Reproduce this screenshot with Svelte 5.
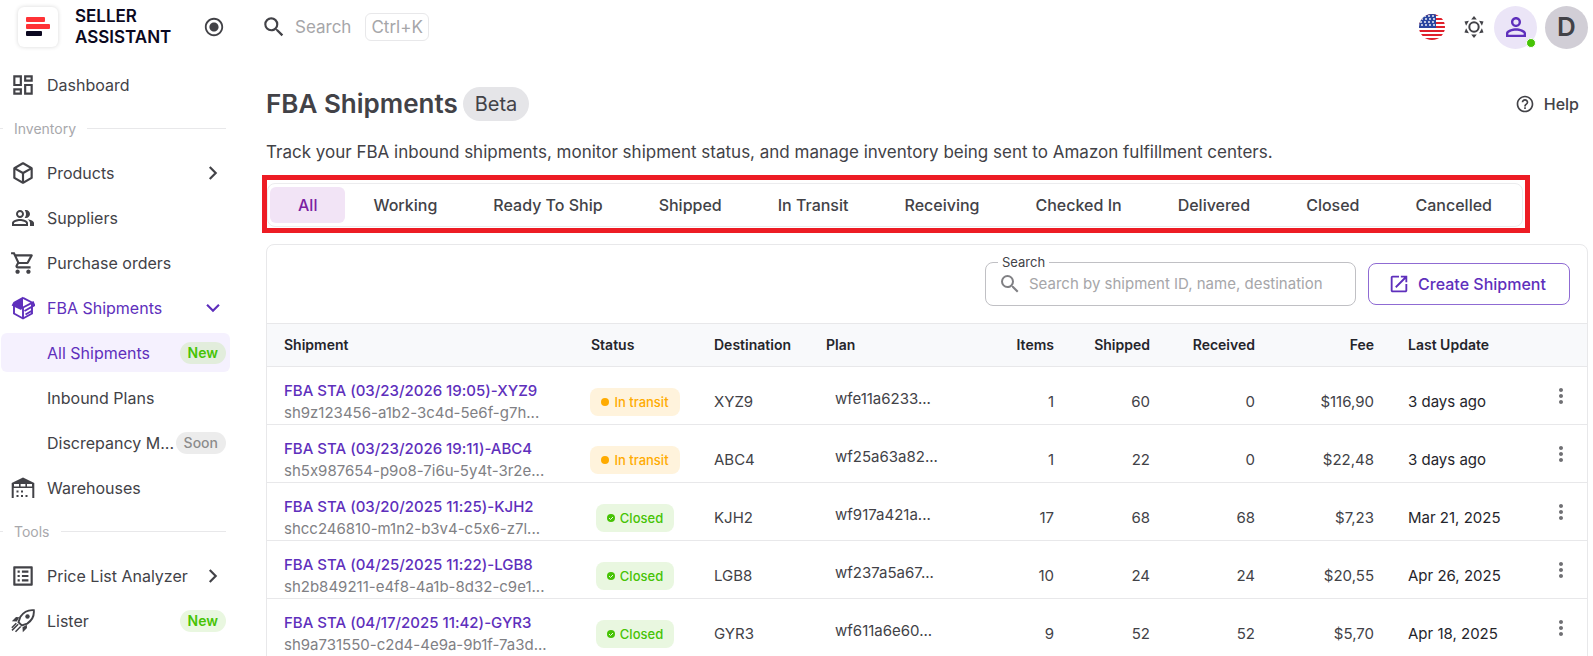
<script lang="ts">
	type NavItem = {
		label: string;
		icon?: string;
		size?: number;
		badge?: string;
		arrow?: 'right' | 'down';
		active?: boolean;
		current?: boolean;
		divider?: boolean;
	};

	const icons: Record<string, string> = {
		search:
			'M15.5 14h-.79l-.28-.27A6.47 6.47 0 0 0 16 9.5 6.5 6.5 0 1 0 9.5 16c1.61 0 3.09-.59 4.23-1.57l.27.28v.79l5 4.99L20.49 19zm-6 0C7.01 14 5 11.99 5 9.5S7.01 5 9.5 5 14 7.01 14 9.5 11.99 14 9.5 14',
		dashboard:
			'M19 5v2h-4V5h4M9 5v6H5V5h4m10 8v6h-4v-6h4M9 17v2H5v-2h4M21 3h-8v6h8V3zM11 3H3v10h8V3zm10 8h-8v10h8V11zm-10 4H3v6h8v-6z',
		cube: 'M21 16.5c0 .38-.21.71-.53.88l-7.9 4.44c-.16.12-.36.18-.57.18s-.41-.06-.57-.18l-7.9-4.44A.99.99 0 0 1 3 16.5v-9c0-.38.21-.71.53-.88l7.9-4.44c.16-.12.36-.18.57-.18s.41.06.57.18l7.9 4.44c.32.17.53.5.53.88v9zM12 4.15L6.04 7.5 12 10.85l5.96-3.35L12 4.15zM5 15.91l6 3.38v-6.71L5 9.21v6.7zm14 0v-6.7l-6 3.37v6.71l6-3.38z',
		people:
			'M16.67 13.13C18.04 14.06 19 15.32 19 17v3h4v-3c0-2.18-3.57-3.47-6.33-3.87zM15 12c2.21 0 4-1.79 4-4s-1.79-4-4-4c-.47 0-.91.1-1.33.24C14.5 5.27 15 6.58 15 8s-.5 2.73-1.33 3.76c.42.14.86.24 1.33.24zM9 12c2.21 0 4-1.79 4-4s-1.79-4-4-4-4 1.79-4 4 1.79 4 4 4zm0-6c1.1 0 2 .9 2 2s-.9 2-2 2-2-.9-2-2 .9-2 2-2zm0 7c-2.67 0-8 1.34-8 4v3h16v-3c0-2.66-5.33-4-8-4zm6 5H3v-.99C3.2 16.29 6.3 15 9 15s5.8 1.29 6 2v1z',
		cart: 'M15.55 13c.75 0 1.41-.41 1.75-1.03l3.58-6.49A.996.996 0 0 0 20.01 4H5.21l-.94-2H1v2h2l3.6 7.59-1.35 2.44C4.52 15.37 5.48 17 7 17h12v-2H7l1.1-2h7.45zM6.16 6h12.15l-2.76 5H8.53L6.16 6zM7 18c-1.1 0-1.99.9-1.99 2S5.9 22 7 22s2-.9 2-2-.9-2-2-2zm10 0c-1.1 0-1.99.9-1.99 2s.89 2 1.99 2 2-.9 2-2-.9-2-2-2z',
		list: 'M19 5v14H5V5h14m1.1-2H3.9c-.5 0-.9.4-.9.9v16.2c0 .4.4.9.9.9h16.2c.4 0 .9-.5.9-.9V3.9c0-.5-.5-.9-.9-.9zM11 7h6v2h-6V7zm0 4h6v2h-6v-2zm0 4h6v2h-6zM7 7h2v2H7zm0 4h2v2H7zm0 4h2v2H7z',
		warehouse:
			'M12 1.5 L23.3 7 V22 H21.3 V12 H2.7 V22 H.7 V7 z M3 8V10.500h5V8zM9.6 8V10.500h4.8V8zM16 8V10.500h5V8zM5.500 14.500h2v2h-2zM10 14.500h2v2h-2zM5.500 19h2v2h-2zM10 19h2v2h-2zM14.500 19h2v2h-2z',
		person:
			'M12 5.9a2.1 2.1 0 1 1 0 4.2 2.1 2.1 0 0 1 0-4.2m0 9c2.97 0 6.1 1.46 6.1 2.1v1.1H5.9V17c0-.64 3.13-2.1 6.1-2.1M12 4C9.79 4 8 5.79 8 8s1.79 4 4 4 4-1.79 4-4-1.79-4-4-4zm0 9c-2.67 0-8 1.34-8 4v3h16v-3c0-2.66-5.33-4-8-4z',
		help: 'M11 18h2v-2h-2v2zm1-16C6.48 2 2 6.48 2 12s4.48 10 10 10 10-4.48 10-10S17.52 2 12 2zm0 18c-4.41 0-8-3.59-8-8s3.59-8 8-8 8 3.59 8 8-3.59 8-8 8zm0-14c-2.21 0-4 1.79-4 4h2c0-1.1.9-2 2-2s2 .9 2 2c0 2-3 1.75-3 5h2c0-2.25 3-2.5 3-5 0-2.21-1.79-4-4-4z',
		radio:
			'M12 7c-2.76 0-5 2.24-5 5s2.24 5 5 5 5-2.24 5-5-2.24-5-5-5zm0-5C6.48 2 2 6.48 2 12s4.48 10 10 10 10-4.48 10-10S17.52 2 12 2zm0 18c-4.42 0-8-3.58-8-8s3.58-8 8-8 8 3.58 8 8-3.58 8-8 8z',
		open: 'M19 19H5V5h7V3H5c-1.11 0-2 .9-2 2v14c0 1.1.89 2 2 2h14c1.1 0 2-.9 2-2v-7h-2v7zM14 3v2h3.59l-9.83 9.83 1.41 1.41L19 6.41V10h2V3h-7z',
		more: 'M12 8c1.1 0 2-.9 2-2s-.9-2-2-2-2 .9-2 2 .9 2 2 2m0 2c-1.1 0-2 .9-2 2s.9 2 2 2 2-.9 2-2-.9-2-2-2m0 6c-1.1 0-2 .9-2 2s.9 2 2 2 2-.9 2-2-.9-2-2-2',
	};

	const nav: NavItem[] = [
		{ label: 'Dashboard', icon: 'dashboard' },
		{ label: 'Inventory', divider: true },
		{ label: 'Products', icon: 'cube' , arrow: 'right' },
		{ label: 'Suppliers', icon: 'people', size: 24 },
		{ label: 'Purchase orders', icon: 'cart' },
		{ label: 'FBA Shipments', icon: 'box', size: 24, arrow: 'down', active: true },
		{ label: 'All Shipments', badge: 'New', active: true, current: true },
		{ label: 'Inbound Plans' },
		{ label: 'Discrepancy M...', badge: 'Soon' },
		{ label: 'Warehouses', icon: 'warehouse', size: 24 },
		{ label: 'Tools', divider: true },
		{ label: 'Price List Analyzer', icon: 'list', arrow: 'right' },
		{ label: 'Lister', icon: 'rocket', size: 24, badge: 'New' },
	];

	const tabs = [
		'All',
		'Working',
		'Ready To Ship',
		'Shipped',
		'In Transit',
		'Receiving',
		'Checked In',
		'Delivered',
		'Closed',
		'Cancelled',
	];
	let selectedTab = $state('All');

	const shipments = [
		{ name: 'FBA STA (03/23/2026 19:05)-XYZ9', id: 'sh9z123456-a1b2-3c4d-5e6f-g7h...', status: 'In transit', dest: 'XYZ9', plan: 'wfe11a6233...', items: 1, shipped: 60, received: 0, fee: '$116,90', updated: '3 days ago' },
		{ name: 'FBA STA (03/23/2026 19:11)-ABC4', id: 'sh5x987654-p9o8-7i6u-5y4t-3r2e...', status: 'In transit', dest: 'ABC4', plan: 'wf25a63a82...', items: 1, shipped: 22, received: 0, fee: '$22,48', updated: '3 days ago' },
		{ name: 'FBA STA (03/20/2025 11:25)-KJH2', id: 'shcc246810-m1n2-b3v4-c5x6-z7l...', status: 'Closed', dest: 'KJH2', plan: 'wf917a421a...', items: 17, shipped: 68, received: 68, fee: '$7,23', updated: 'Mar 21, 2025' },
		{ name: 'FBA STA (04/25/2025 11:22)-LGB8', id: 'sh2b849211-e4f8-4a1b-8d32-c9e1...', status: 'Closed', dest: 'LGB8', plan: 'wf237a5a67...', items: 10, shipped: 24, received: 24, fee: '$20,55', updated: 'Apr 26, 2025' },
		{ name: 'FBA STA (04/17/2025 11:42)-GYR3', id: 'sh9a731550-c2d4-4e9a-9b1f-7a3d...', status: 'Closed', dest: 'GYR3', plan: 'wf611a6e60...', items: 9, shipped: 52, received: 52, fee: '$5,70', updated: 'Apr 18, 2025' },
	];
</script>

{#snippet icon(name: string, size = 24)}
	<svg width={size} height={size} viewBox="0 0 24 24" fill="currentColor" fill-rule="evenodd" aria-hidden="true">
		{#if name === 'box'}
			<path d="M12 .8 2.500 6 .6 9.500l2 1 7.400 3.500 2-2.500z" />
			<path
				d="M12 1.800 21 6.500V17.500L12 22.500 3 17.500V9M12 11.500V22.500M12 11.500 22 6.300 23.300 9.200 13.500 15M14.500 18.500 20.500 15"
				fill="none"
				stroke="currentColor"
				stroke-width="1.900"
			/>
		{:else if name === 'rocket'}
			<path
				d="M22.800 1.200c-6-.6-10.300 2-13.400 6.600L7.500 13.200l3.300 3.300 5.400-1.900c4.600-3.100 7.200-7.400 6.600-13.400z"
				fill="none"
				stroke="currentColor"
				stroke-width="1.900"
			/>
			<circle cx="16.500" cy="7.500" r="2.200" />
			<path d="M8.300 8.200 5 8 .8 12.200l5 .3zM15.800 15.700l.2 3.300-4.200 4.200-.3-5z" />
			<path d="M7.200 15.200 1 21.400M5.300 14.300.8 18.800M9.700 17.500 4.500 22.800" fill="none" stroke="currentColor" stroke-width="1.500" />
		{:else}
			<path d={icons[name]} />
		{/if}
	</svg>
{/snippet}

<div class="app">
	<aside class="sidebar">
		<div class="brand">
			<span class="logo">
				<svg width="24" height="20" viewBox="0 0 24 20" aria-hidden="true">
					<rect width="19" height="5" rx="1" fill="#ff3236" />
					<rect y="7" width="24" height="5" rx="1" fill="#ff3236" />
					<rect y="14" width="16" height="5" rx="1" fill="#0b0820" />
				</svg>
			</span>
			<span class="brand-name">SELLER<br />ASSISTANT</span>
			<button class="icon-btn pin" aria-label="Collapse menu">{@render icon('radio', 22)}</button>
		</div>

		<nav>
			{#each nav as item}
				{#if item.divider}
					<div class="divider"><span>{item.label}</span></div>
				{:else}
					<a href="#top" class="nav-item" class:active={item.active} class:current={item.current}>
						<span class="nav-icon">
							{#if item.icon}{@render icon(item.icon, item.size ?? 26)}{/if}
						</span>
						<span class="nav-label">{item.label}</span>
						{#if item.badge}
							<span class="badge" class:soon={item.badge === 'Soon'}>{item.badge}</span>
						{/if}
						{#if item.arrow}
							<svg class="arrow" class:down={item.arrow === 'down'} width="26" height="26" viewBox="0 0 24 24" aria-hidden="true">
								<path d="M9 6.500l5.500 5.500L9 17.500" fill="none" stroke="currentColor" stroke-width="2" />
							</svg>
						{/if}
					</a>
				{/if}
			{/each}
		</nav>
	</aside>

	<div class="content">
		<header class="topbar">
			<button class="global-search">
				{@render icon('search', 26)}
				<span>Search</span>
				<kbd>Ctrl+K</kbd>
			</button>
			<div class="tools">
				<button class="icon-btn" aria-label="Language">
					<svg width="26" height="26" viewBox="0 0 26 26" aria-hidden="true">
						<clipPath id="flag"><circle cx="13" cy="13" r="13" /></clipPath>
						<g clip-path="url(#flag)">
							<rect width="26" height="26" fill="#fff" />
							{#each [0, 4, 8, 12, 16, 20, 24] as y}
								<rect {y} width="26" height="2" fill="#e0202c" />
							{/each}
							<rect width="17" height="14" fill="#2a46a0" />
							{#each [2, 5, 8, 11] as y, row}
								{#each [2, 6, 10, 14] as x}
									<circle cx={x + (row % 2)} cy={y} r="0.9" fill="#fff" />
								{/each}
							{/each}
						</g>
					</svg>
				</button>
				<button class="icon-btn" aria-label="Theme">
					<svg width="22" height="24" viewBox="0 0 22 24" aria-hidden="true">
						<circle cx="11" cy="12" r="4.700" fill="none" stroke="currentColor" stroke-width="2" />
						{#each [0, 60, 120, 180, 240, 300] as angle}
							<path d="M11 1l2.800 3.500h-5.600z" fill="currentColor" transform="rotate({angle} 11 12)" />
						{/each}
					</svg>
				</button>
				<button class="avatar account" aria-label="Account">
					{@render icon('person', 30)}
					<span class="online"></span>
				</button>
				<button class="avatar initial">D</button>
			</div>
		</header>

		<main>
			<div class="title-row">
				<h1>FBA Shipments</h1>
				<span class="beta">Beta</span>
				<a class="help" href="#help">{@render icon('help', 20)}Help</a>
			</div>
			<p class="intro">
				Track your FBA inbound shipments, monitor shipment status, and manage inventory being sent to Amazon fulfillment
				centers.
			</p>

			<div class="highlight">
				<div class="tabs" role="tablist">
					{#each tabs as tab}
						<button
							role="tab"
							class:selected={selectedTab === tab}
							aria-selected={selectedTab === tab}
							onclick={() => (selectedTab = tab)}>{tab}</button
						>
					{/each}
				</div>
			</div>

			<section class="card">
				<div class="toolbar">
					<div class="field">
						<label for="shipment-search">Search</label>
						{@render icon('search')}
						<input id="shipment-search" type="text" placeholder="Search by shipment ID, name, destination" />
					</div>
					<button class="create">{@render icon('open', 22)}Create Shipment</button>
				</div>

				<table>
					<colgroup>
						<col />
						<col class="w-status" />
						<col class="w-dest" />
						<col class="w-plan" />
						<col class="w-items" />
						<col class="w-shipped" />
						<col class="w-received" />
						<col class="w-fee" />
						<col class="w-updated" />
						<col class="w-actions" />
					</colgroup>
					<thead>
						<tr>
							<th>Shipment</th>
							<th>Status</th>
							<th>Destination</th>
							<th>Plan</th>
							<th class="num">Items</th>
							<th class="num">Shipped</th>
							<th class="num">Received</th>
							<th class="num">Fee</th>
							<th>Last Update</th>
							<th></th>
						</tr>
					</thead>
					<tbody>
						{#each shipments as s}
							<tr>
								<td class="shipment">
									<a href="#shipment">{s.name}</a>
									<span>{s.id}</span>
								</td>
								<td class="status">
									<span class="chip-box">
										<span class="chip" class:closed={s.status === 'Closed'}>
											<svg width="8" height="8" viewBox="0 0 8 8" aria-hidden="true">
												<circle cx="4" cy="4" r="4" fill="currentColor" />
												{#if s.status === 'Closed'}
													<path d="M2 4l1.500 1.500L6 3" fill="none" stroke="#e9f7e0" />
												{/if}
											</svg>
											{s.status}
										</span>
									</span>
								</td>
								<td>{s.dest}</td>
								<td class="plan">{s.plan}</td>
								<td class="num">{s.items}</td>
								<td class="num">{s.shipped}</td>
								<td class="num">{s.received}</td>
								<td class="num">{s.fee}</td>
								<td class="updated">{s.updated}</td>
								<td class="actions">
									<button class="icon-btn" aria-label="Shipment actions">{@render icon('more')}</button>
								</td>
							</tr>
						{/each}
					</tbody>
				</table>
			</section>
		</main>
	</div>
</div>

<style>
	:global(body) {
		background: #fff;
	}

	.app {
		--purple: #5e2fbc;
		--ink: #424247;
		--line: #e8e8ea;
		display: flex;
		height: 100vh;
		overflow: hidden;
		font-family: Inter, 'Liberation Sans', sans-serif;
		font-size: 16px;
		font-variant-ligatures: no-contextual;
		line-height: 22px;
		color: var(--ink);
	}

	button,
	input {
		font: inherit;
		color: inherit;
	}

	button {
		border: 0;
		padding: 0;
		background: none;
		cursor: pointer;
	}

	a {
		color: inherit;
		text-decoration: none;
	}

	svg {
		display: block;
		flex: none;
	}

	.icon-btn {
		display: flex;
	}

	/* Sidebar */
	.sidebar {
		flex: none;
		width: 232px;
	}

	.brand {
		display: flex;
		align-items: center;
		height: 54px;
		padding: 0 7px 0 18px;
		margin-bottom: 11px;
	}

	.logo {
		display: grid;
		place-items: center;
		width: 40px;
		height: 40px;
		border-radius: 6px;
		box-shadow: 0 0 4px rgba(0, 0, 0, 0.16);
	}

	.brand-name {
		margin-left: 17px;
		font-size: 17px;
		font-weight: 600;
		line-height: 21px;
		color: #0b0820;
	}

	.pin {
		margin-left: auto;
	}

	nav {
		display: flex;
		flex-direction: column;
		gap: 6px;
	}

	.nav-item {
		display: flex;
		align-items: center;
		height: 39px;
		margin: 0 2px 0 1px;
		padding: 0 4px 0 9px;
		border-radius: 6px;
	}

	.nav-item.active {
		color: var(--purple);
	}

	.nav-item.current {
		background: #f5f1fe;
	}

	.nav-icon {
		display: flex;
		justify-content: center;
		flex: none;
		width: 26px;
		margin-right: 11px;
	}

	.nav-label {
		flex: 1;
		white-space: nowrap;
	}

	.arrow.down {
		transform: rotate(90deg);
	}

	.badge {
		padding: 0 8px;
		border-radius: 11px;
		background: #e9f7e0;
		font-size: 14px;
		font-weight: 600;
		color: #46c305;
	}

	.current .badge {
		background: #e2eddc;
	}

	.badge.soon {
		background: #ececec;
		font-weight: 500;
		color: #8c8c8c;
	}

	.divider {
		display: flex;
		align-items: center;
		gap: 11px;
		height: 37px;
		padding-right: 6px;
		font-size: 14px;
		color: #a8a8ac;
	}

	.divider::before,
	.divider::after {
		content: '';
		width: 3px;
		height: 1px;
		background: var(--line);
	}

	.divider::after {
		flex: 1;
	}

	/* Top bar */
	.content {
		flex: 1;
		min-width: 0;
		overflow-y: auto;
		scrollbar-width: none;
		padding: 0 5px 0 34px;
	}

	.topbar {
		display: flex;
		align-items: center;
		justify-content: space-between;
		height: 54px;
	}

	.global-search {
		display: flex;
		align-items: center;
		margin-left: -5px;
		font-size: 17px;
	}

	.global-search span {
		margin: 0 14px 0 8px;
		color: #a6a6a9;
	}

	kbd {
		padding: 2px 5px;
		border: 1px solid var(--line);
		border-radius: 6px;
		font: inherit;
		color: #a6a6a9;
	}

	.tools {
		display: flex;
		align-items: center;
	}

	.tools .icon-btn {
		margin-right: 18px;
	}

	.tools .icon-btn + .icon-btn {
		margin-right: 9px;
	}

	.avatar {
		display: grid;
		place-items: center;
		position: relative;
		width: 43px;
		height: 43px;
		border-radius: 50%;
	}

	.account {
		margin-right: 8px;
		background: #ebe5f7;
		color: var(--purple);
	}

	.initial {
		background: #d1ced6;
		font-size: 26px;
		font-weight: 600;
	}

	.online {
		position: absolute;
		right: 1px;
		bottom: 1px;
		width: 8px;
		height: 8px;
		border: 1px solid #fff;
		border-radius: 50%;
		background: #46c305;
	}

	/* Page heading */
	.title-row {
		display: flex;
		align-items: center;
		margin-top: 33px;
		height: 34px;
	}

	h1 {
		margin: 0;
		font-size: 26px;
		font-weight: 600;
		line-height: 34px;
	}

	.beta {
		margin-left: 5px;
		padding: 0 12px;
		border-radius: 17px;
		background: #e5e5e8;
		font-size: 20px;
		line-height: 34px;
	}

	.help {
		display: flex;
		align-items: center;
		gap: 9px;
		margin: 0 9px 0 auto;
		font-weight: 500;
	}

	.intro {
		margin: 20px 0 12px;
		font-size: 17px;
	}

	/* Status tabs */
	.highlight {
		margin: 0 58px 0 -4px;
		padding: 3px 2px 1px 0;
		border: 5px solid #ed1c24;
	}

	.tabs {
		display: flex;
		padding: 3px 2px;
		border: 1px solid #ececee;
		border-radius: 8px;
	}

	.tabs button {
		flex: 1 1 auto;
		height: 36px;
		border-radius: 6px;
		font-weight: 500;
		white-space: nowrap;
	}

	.tabs button.selected {
		background: #f2e4f6;
		color: #7b1fa2;
	}

	/* Table card */
	.card {
		margin-top: 11px;
		border: 1px solid var(--line);
		border-radius: 8px 8px 0 0;
	}

	.toolbar {
		display: flex;
		justify-content: flex-end;
		align-items: center;
		gap: 12px;
		padding: 17px;
	}

	.field {
		display: flex;
		align-items: center;
		gap: 7px;
		position: relative;
		width: 371px;
		height: 44px;
		padding: 0 12px;
		border: 1px solid #c0c0c4;
		border-radius: 8px;
		box-sizing: border-box;
		color: #808084;
	}

	.field label {
		position: absolute;
		top: -9px;
		left: 12px;
		padding: 0 4px;
		background: #fff;
		font-size: 13px;
		line-height: 16px;
		color: var(--ink);
	}

	.field input {
		flex: 1;
		min-width: 0;
		padding: 0;
		border: 0;
		outline: 0;
		background: none;
		font-size: 15px;
		color: var(--ink);
	}

	.field input::placeholder {
		color: #a6a6a9;
		opacity: 1;
	}

	.create {
		display: flex;
		align-items: center;
		justify-content: center;
		gap: 8px;
		width: 202px;
		height: 42px;
		padding-right: 4px;
		border: 1px solid #8f6bd3;
		border-radius: 8px;
		font-weight: 500;
		color: var(--purple);
	}

	table {
		width: 100%;
		border-collapse: separate;
		border-spacing: 0;
		table-layout: fixed;
		font-size: 15px;
	}

	.w-status {
		width: 123px;
	}
	.w-dest {
		width: 112px;
	}
	.w-plan {
		width: 165px;
	}
	.w-items {
		width: 97px;
	}
	.w-shipped {
		width: 96px;
	}
	.w-received {
		width: 105px;
	}
	.w-fee {
		width: 119px;
	}
	.w-updated {
		width: 145px;
	}
	.w-actions {
		width: 51px;
	}

	th {
		height: 42px;
		padding: 0 17px;
		border: 1px solid var(--line);
		border-width: 1px 0;
		background: #f8f9fb;
		font-size: 14px;
		font-weight: 600;
		text-align: left;
		color: #25252b;
	}

	td {
		height: 58px;
		padding: 24px 17px 0;
		border-bottom: 1px solid var(--line);
		box-sizing: border-box;
		vertical-align: top;
		white-space: nowrap;
	}

	.num {
		text-align: right;
	}

	td.shipment {
		padding: 13px 17px 0;
	}

	.shipment a,
	.shipment span {
		display: block;
	}

	.shipment a {
		font-weight: 500;
		color: var(--purple);
	}

	.shipment span {
		color: #808084;
	}

	td.status {
		padding-top: 21px;
	}

	.chip-box {
		display: flex;
		justify-content: center;
		width: 88px;
	}

	.chip {
		display: flex;
		align-items: center;
		gap: 5px;
		padding: 0 11px;
		border-radius: 8px;
		background: #fff3dc;
		font-size: 13px;
		font-weight: 500;
		line-height: 28px;
		color: #ffab00;
	}

	.chip.closed {
		background: #e9f7e0;
		color: #46c305;
	}

	td.plan {
		padding: 21px 26px 0;
	}

	td.updated {
		color: #25252b;
	}

	td.actions {
		padding: 17px 13px 0;
		color: #707074;
	}
</style>
